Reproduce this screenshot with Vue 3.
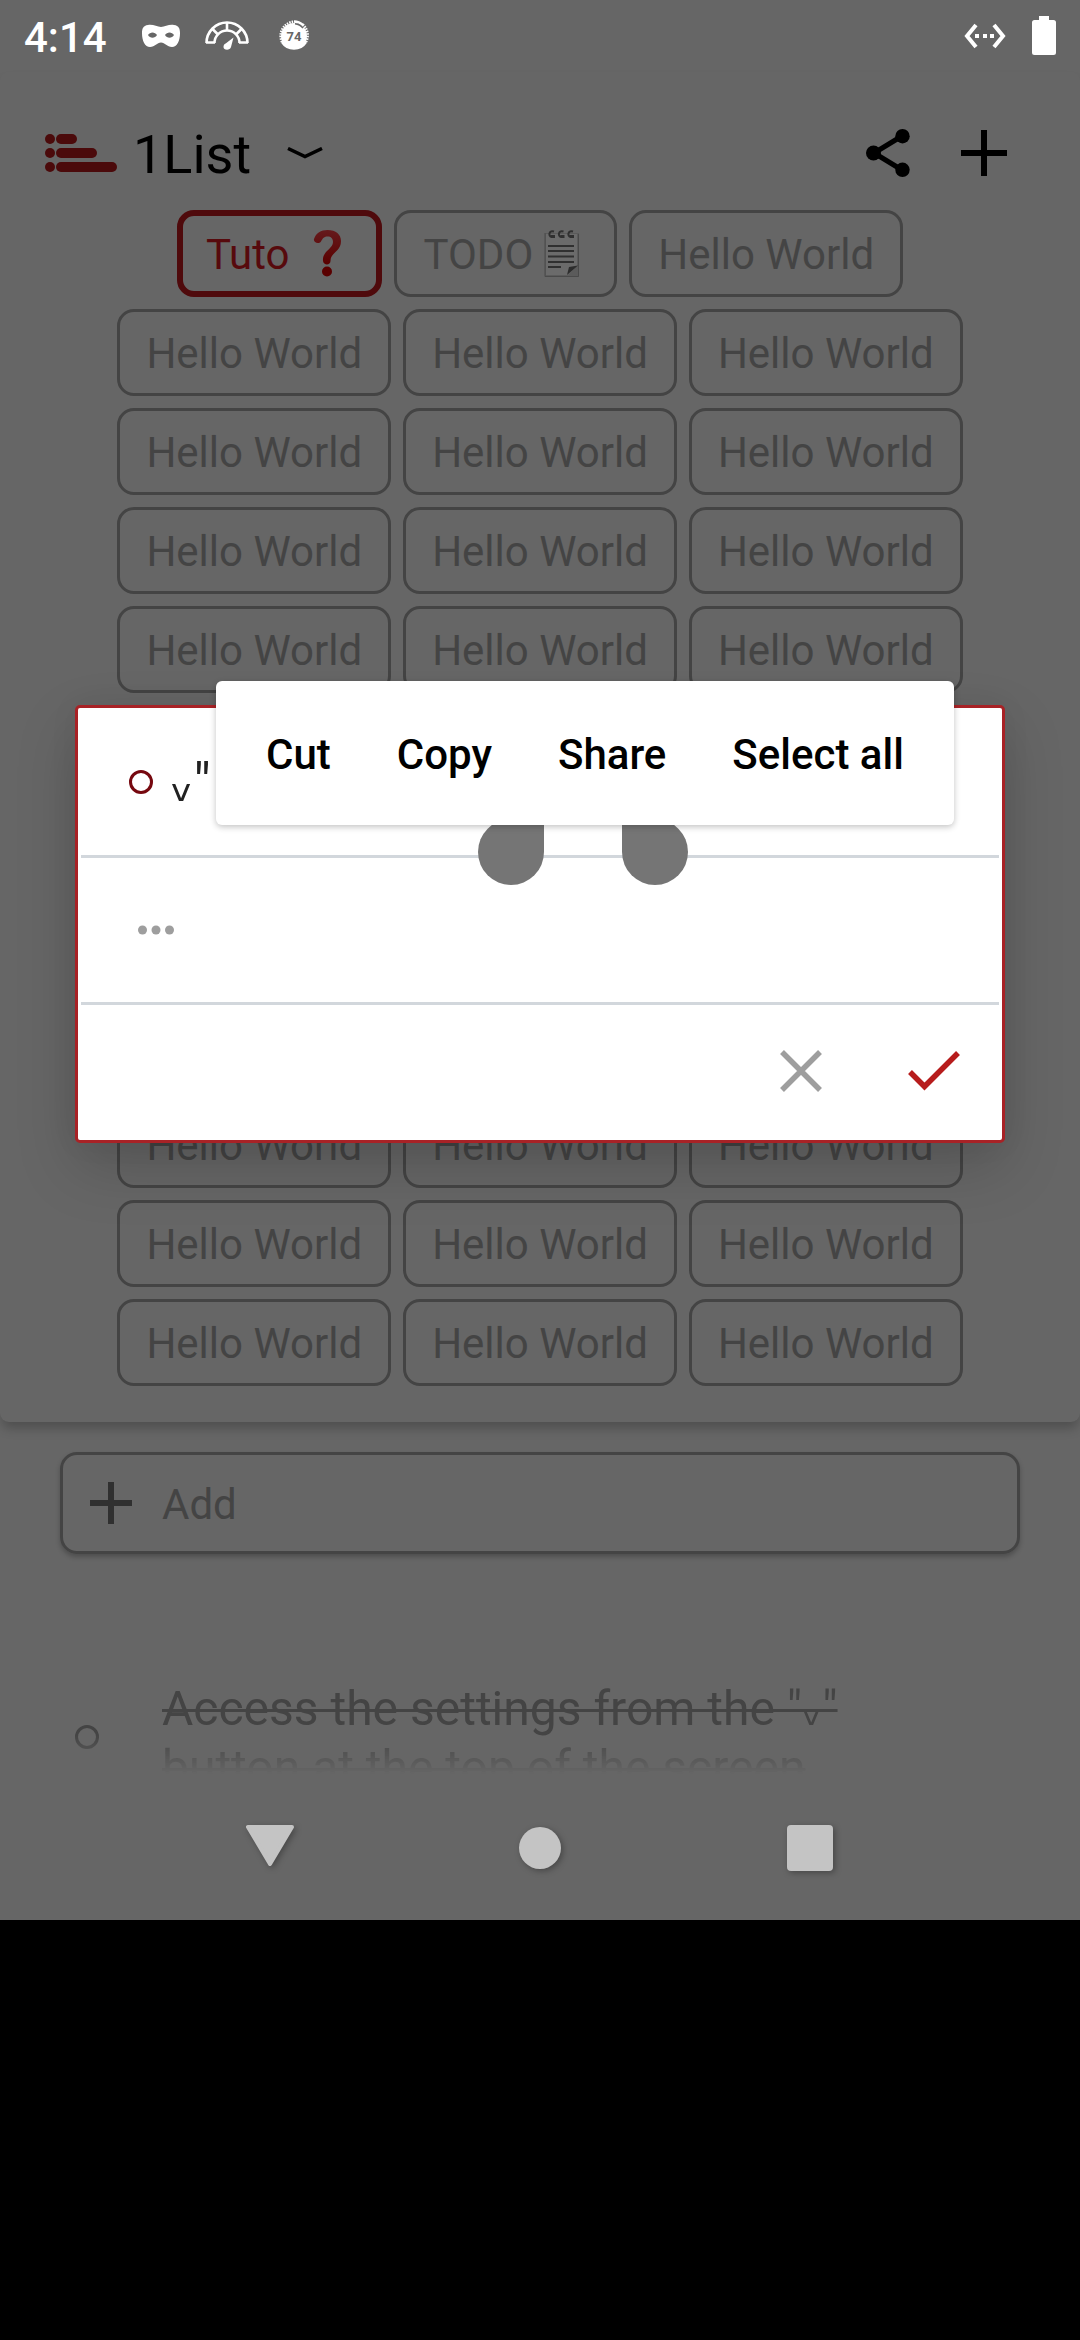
<script setup>
import { ref } from 'vue'

const tabs = ref([
  { name: 'Tuto', emoji: 'question', active: true },
  { name: 'TODO', emoji: 'notepad' },
  ...Array.from({ length: 34 }, () => ({ name: 'Hello World' })),
])
const draft = ref('ᵥ"')
const actions = ['Cut', 'Copy', 'Share', 'Select all']
</script>

<template>
  <div class="screen">
    <header class="status">
      <span class="clock">4:14</span>
      <svg class="mask-icon" width="40" height="24" viewBox="0 0 40 24">
        <path fill="#fff" fill-rule="evenodd" d="M7 1C12 0 16 3 20 3S28 0 33 1C38 1.500 39 5 39 9C39 17 36 23 31 23C26 23 24 18.500 20 18.500S14 23 9 23C4 23 1 17 1 9C1 5 2 1.500 7 1ZM7 11C9 14.500 14 14.500 16 11C14 7.500 9 7.500 7 11ZM24 11C26 14.500 31 14.500 33 11C31 7.500 26 7.500 24 11Z" />
      </svg>
      <svg class="gauge-icon" width="44" height="30" viewBox="0 0 44 30">
        <g fill="none" stroke="#fff">
          <path stroke-width="2.600" d="M1.500 22A20.500 20.500 0 0 1 42.500 22" />
          <path stroke-width="2.600" d="M9.500 22A12.500 12.500 0 0 1 34.500 22" />
          <path stroke-width="2.600" d="M1 21.500H10M34 21.500H43M22 2V10M7.500 8L13 13.500M36.500 8L31 13.500" />
        </g>
        <path fill="#fff" d="M28.500 16.500L26 26C25 30 18 29.500 18.500 25.500C18.700 23.500 20 23 21 22.300Z" />
      </svg>
      <svg class="badge-icon" width="32" height="32" viewBox="0 0 32 32">
        <circle cx="16" cy="16" r="13" fill="#fff" />
        <path d="M4 22A14.300 14.300 0 0 1 16 1.700" fill="none" stroke="#fff" stroke-width="2.600" stroke-dasharray="1.500 1" />
        <path d="M28 22A14.300 14.300 0 0 0 24 4" fill="none" stroke="#fff" stroke-width="2.600" stroke-dasharray="1.500 1" />
        <path d="M16 1.500A14.300 14.300 0 0 1 25 5M4 22A14.300 14.300 0 0 0 28 22" fill="none" stroke="#fff" stroke-width="2.400" />
        <path d="M17 3.800A12 12 0 0 1 25 8" fill="none" stroke="#666" stroke-width="1.500" />
        <text x="16" y="21" text-anchor="middle" font-family="Roboto, sans-serif" font-size="13" font-weight="700" fill="#666">74</text>
      </svg>
      <span class="spacer"></span>
      <svg class="link-icon" width="42" height="26" viewBox="0 0 42 26">
        <path fill="none" stroke="#fff" stroke-width="4" d="M12 2L3 13L12 24M30 2L39 13L30 24" />
        <path fill="#fff" d="M11 11H15V15H11ZM19 11H23V15H19ZM26 11H30V15H26Z" />
      </svg>
      <svg width="24" height="40" viewBox="0 0 24 40">
        <path fill="#fff" d="M7 0H17V4H21.500Q24 4 24 6.500V36.500Q24 39 21.500 39H2.500Q0 39 0 36.500V6.500Q0 4 2.500 4H7Z" />
      </svg>
    </header>

    <main class="content">
      <section class="card">
        <div class="toolbar">
          <svg width="72" height="38" viewBox="0 0 72 38" fill="#4b0a0b">
            <circle cx="5" cy="5" r="5" /><circle cx="5" cy="19" r="5" /><circle cx="5" cy="33" r="5" />
            <rect x="11" y="0" width="21" height="10" rx="5" />
            <rect x="11" y="14" width="41" height="10" rx="5" />
            <rect x="11" y="28" width="61" height="10" rx="5" />
          </svg>
          <h1 class="title">1List</h1>
          <button class="icon-btn" aria-label="Settings">
            <svg width="36" height="12" viewBox="0 0 36 12"><path fill="none" stroke="#000" stroke-width="3.500" d="M1 1.500L18 9.500L35 1.500" /></svg>
          </button>
          <span class="spacer"></span>
          <button class="icon-btn share" aria-label="Share list">
            <svg width="44" height="48" viewBox="0 0 44 48">
              <path fill="none" stroke="#000" stroke-width="5" d="M36 7L8 24L36 41" />
              <circle cx="36.500" cy="7.200" r="7.200" /><circle cx="7.500" cy="24" r="7.500" /><circle cx="36.500" cy="40.800" r="7.200" />
            </svg>
          </button>
          <button class="icon-btn" aria-label="New list">
            <svg width="46" height="46" viewBox="0 0 46 46"><path d="M20 0H26V20H46V26H26V46H20V26H0V20H20Z" /></svg>
          </button>
        </div>

        <nav class="tabs">
          <button v-for="(tab, i) in tabs" :key="i" class="tab" :class="{ active: tab.active }">
            <span class="tab-name">{{ tab.name }}</span>
            <svg v-if="tab.emoji === 'question'" class="emoji spaced" width="52" height="48" viewBox="0 0 52 48">
              <defs>
                <linearGradient id="mark" x1="0" y1="0" x2="0" y2="1">
                  <stop offset="0" stop-color="#651a1c" /><stop offset="1" stop-color="#5a0000" />
                </linearGradient>
              </defs>
              <path fill="url(#mark)" d="M13 9C15 3 20 0 26.500 0C35 0 40 4.500 40 11C40 22 29.500 22 29.500 31C29.500 35.500 22.500 35.500 22 31C21 21 32 19 32 12C32 8.500 30 6.500 26.500 6.500C22.500 6.500 21.500 9 20 11.500C18 14.500 12 13 13 9Z" />
              <circle cx="26" cy="41.500" r="5" fill="#5a0000" />
            </svg>
            <svg v-if="tab.emoji === 'notepad'" class="emoji" width="52" height="48" viewBox="0 0 52 48">
              <path fill="#5b5b5b" d="M9 3H43V47H9Z" />
              <path fill="#6b6b6b" d="M10 4H41V36L32 45H10Z" />
              <path fill="#2d2d2d" d="M31 45L33 37L42 35.500Z" />
              <path stroke="#4a4a4a" stroke-width="1" fill="none" d="M9 3V46.500H42.500V4" />
              <path stroke="#303030" stroke-width="2" d="M12 16H38M12 21H38M12 26.500H38M12 32H38M12 37H25" />
              <path stroke="#303030" stroke-width="2" fill="none" d="M18 1.500C13 0 12 6 15.500 7M27.500 1.500C22.500 0 21.500 6 25 7M37 1.500C32 0 31 6 34.500 7" />
              <path fill="#303030" d="M15 5H19V8H15ZM24.500 5H28.500V8H24.500ZM34 5H38V8H34Z" />
            </svg>
          </button>
        </nav>
      </section>

      <label class="add">
        <svg width="42" height="42" viewBox="0 0 42 42"><path fill="#303030" d="M18 0H24V18H42V24H24V42H18V24H0V18H18Z" /></svg>
        <input class="add-input" type="text" placeholder="Add" />
      </label>

      <ul class="list">
        <li>
          <label class="item">
            <input class="round muted" type="checkbox" />
            <span class="item-text">Access the settings from the "ᵥ" button at the top of the screen</span>
          </label>
        </li>
      </ul>

      <div class="overlay">
        <form class="dialog" @submit.prevent>
          <div class="row">
            <input class="round" type="checkbox" aria-label="Done" />
            <input v-model="draft" class="edit" type="text" aria-label="Item text" />
          </div>
          <div class="row second">
            <button type="button" class="icon-btn" aria-label="More">
              <svg width="36" height="10" viewBox="0 0 36 10" fill="#9e9e9e">
                <circle cx="4.500" cy="5" r="4.500" /><circle cx="18" cy="5" r="4.500" /><circle cx="31.500" cy="5" r="4.500" />
              </svg>
            </button>
          </div>
          <div class="buttons">
            <button type="button" class="icon-btn" aria-label="Cancel">
              <svg width="42" height="42" viewBox="0 0 42 42"><path fill="none" stroke="#9e9e9e" stroke-width="5.500" d="M2 2L40 40M40 2L2 40" /></svg>
            </button>
            <button type="submit" class="icon-btn" aria-label="Save">
              <svg width="52" height="42" viewBox="0 0 52 42"><path fill="none" stroke="#b71c1c" stroke-width="5.500" d="M2 22L16.500 36.500L50 3" /></svg>
            </button>
          </div>
          <span class="handle start"></span>
          <span class="handle end"></span>
          <div class="menu" role="toolbar" aria-label="Text actions">
            <button v-for="a in actions" :key="a" type="button" class="menu-item">{{ a }}</button>
          </div>
        </form>
      </div>
    </main>

    <nav class="system">
      <button class="icon-btn" aria-label="Back">
        <svg class="drop back" width="50" height="48" viewBox="0 0 50 48"><path fill="#c4c4c4" stroke="#c4c4c4" stroke-width="4" stroke-linejoin="round" d="M3 3H47L25 40Z" /></svg>
      </button>
      <button class="icon-btn" aria-label="Home">
        <svg class="drop" width="42" height="42" viewBox="0 0 42 42"><circle cx="21" cy="21" r="21" fill="#c4c4c4" /></svg>
      </button>
      <button class="icon-btn" aria-label="Recent apps">
        <svg class="drop" width="46" height="46" viewBox="0 0 46 46"><rect width="46" height="46" rx="4" fill="#c4c4c4" /></svg>
      </button>
    </nav>
  </div>
</template>

<style>
body {
  background: #000;
}
</style>

<style scoped>
.screen {
  background: #666;
  font-family: Roboto, 'DejaVu Sans', sans-serif;
  font-size: 42px;
  line-height: 48px;
  color: #444;
}
.screen * {
  box-sizing: border-box;
}
svg {
  display: block;
  flex: none;
}
button,
input {
  font: inherit;
  color: inherit;
  background: none;
  border: 0;
  padding: 0;
  margin: 0;
  outline: 0;
}
.spacer {
  flex: 1;
}
.icon-btn {
  display: flex;
  align-items: center;
  justify-content: center;
}

.status {
  display: flex;
  align-items: center;
  height: 72px;
  padding: 0 24px;
}
.clock {
  padding-top: 3px;
  color: #fff;
  font-weight: 500;
  margin-right: 34px;
}
.gauge-icon {
  margin-left: 24px;
}
.badge-icon {
  margin-left: 29px;
}
.link-icon {
  margin-right: 26px;
}

.content {
  position: relative;
}
.card {
  padding: 24px 45px 36px;
  border-radius: 9px;
  box-shadow: 0 8px 12px -2px rgba(0, 0, 0, 0.24);
}
.toolbar {
  display: flex;
  align-items: center;
  height: 114px;
}
.title {
  margin: 0 36px 0 16px;
  padding-top: 4px;
  font-size: 54px;
  font-weight: 400;
  line-height: 64px;
  color: #000;
}
.share {
  margin-right: 51px;
}
.toolbar .icon-btn:last-child {
  margin-right: 28px;
}
.tabs {
  display: flex;
  flex-wrap: wrap;
  justify-content: center;
  gap: 12px;
  padding: 0 45px;
}
.tab {
  display: flex;
  align-items: center;
  height: 87px;
  padding: 0 26px;
  border: 3px solid #444;
  border-radius: 17px;
}
.tab.active {
  padding: 0 23px;
  border: 6px solid #4f0a0c;
  color: #570a0d;
}
.tab-name {
  padding-top: 3px;
}
.emoji {
  margin-left: 3px;
}
.emoji.spaced {
  margin-left: 12px;
}

.add {
  display: flex;
  align-items: center;
  gap: 30px;
  height: 102px;
  margin: 30px 60px 0;
  padding: 0 27px;
  border: 3px solid #444;
  border-radius: 17px;
  box-shadow: 0 3px 5px rgba(0, 0, 0, 0.24);
}
.add-input {
  flex: 1;
  min-width: 0;
  padding-top: 3px;
}
.add-input::placeholder {
  color: #444;
  opacity: 1;
}

.list {
  height: 222px;
  margin: 0;
  padding: 123px 150px 0 75px;
  list-style: none;
  overflow: hidden;
  mask-image: linear-gradient(#000 calc(100% - 42px), transparent calc(100% - 2px));
}
.item {
  display: flex;
  align-items: center;
  gap: 63px;
}
.item-text {
  flex: 1;
  padding-top: 2px;
  font-size: 48px;
  line-height: 59px;
  text-decoration: line-through;
  text-decoration-thickness: 3px;
}
.round {
  flex: none;
  appearance: none;
  width: 24px;
  height: 24px;
  border: 3px solid #76080f;
  border-radius: 50%;
}
.round.muted {
  border-color: #444;
}

.overlay {
  position: absolute;
  inset: 0;
  display: flex;
  align-items: center;
  padding: 0 75px;
}
.dialog {
  position: relative;
  flex: 1;
  background: #fff;
  border: 3px solid #a82226;
  border-radius: 5px;
  box-shadow: 0 24px 60px rgba(0, 0, 0, 0.17), 0 0 30px rgba(0, 0, 0, 0.05);
}
.row {
  display: flex;
  align-items: center;
  gap: 18px;
  height: 150px;
  margin: 0 3px;
  padding: 0 48px;
  border-bottom: 3px solid #d2d7dc;
}
.row.second {
  height: 147px;
  padding: 0 57px;
}
.edit {
  flex: 1;
  min-width: 0;
  padding-top: 3px;
  font-size: 54px;
  line-height: 64px;
  color: #212121;
}
.buttons {
  display: flex;
  align-items: center;
  justify-content: flex-end;
  gap: 86px;
  height: 135px;
  padding: 0 42px 3px 0;
}
.handle {
  position: absolute;
  top: 111px;
  width: 66px;
  height: 66px;
  background: #757575;
  border-radius: 50%;
}
.handle.start {
  left: 400px;
  border-top-right-radius: 0;
}
.handle.end {
  left: 544px;
  border-top-left-radius: 0;
}
.menu {
  position: absolute;
  top: -27px;
  left: 138px;
  display: flex;
  height: 144px;
  padding: 0 17px;
  background: #fff;
  border-radius: 6px;
  box-shadow: 0 2px 6px rgba(0, 0, 0, 0.24);
}
.menu-item {
  padding: 3px 33px 0;
  font-weight: 500;
  color: #000;
  white-space: nowrap;
}

.system {
  display: flex;
  align-items: center;
  height: 144px;
  padding: 0 135px;
}
.system .icon-btn {
  flex: 1;
}
.drop {
  overflow: visible;
  filter: drop-shadow(2px 2px 3px rgba(0, 0, 0, 0.3));
}
</style>
